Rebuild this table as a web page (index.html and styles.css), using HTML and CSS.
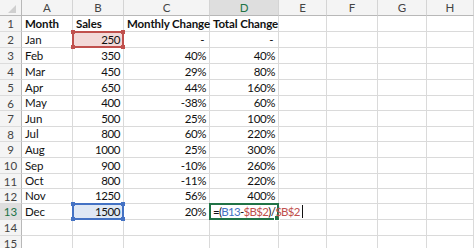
FILE: index.html
```html
<!DOCTYPE html>
<html>
<head>
<meta charset="utf-8">
<link rel="stylesheet" href="styles.css">
</head>
<body>
<div class="sheet">
  <div class="hd corner"><span class="tri"></span></div>
  <div class="hd col">A</div><div class="hd col">B</div><div class="hd col">C</div><div class="hd col sel-col">D</div><div class="hd col">E</div><div class="hd col">F</div><div class="hd col">G</div><div class="hd col">H</div>

  <div class="hd row">1</div><div class="c b">Month</div><div class="c b">Sales</div><div class="c b">Monthly Change</div><div class="c b">Total Change</div><div class="c"></div><div class="c"></div><div class="c"></div><div class="c"></div>
  <div class="hd row">2</div><div class="c">Jan</div><div class="c n ref-red"><span class="box red"><i class="h tl"></i><i class="h tr"></i><i class="h bl"></i><i class="h br"></i></span><span class="v">250</span></div><div class="c n dash">-</div><div class="c n dash">-</div><div class="c"></div><div class="c"></div><div class="c"></div><div class="c"></div>
  <div class="hd row">3</div><div class="c">Feb</div><div class="c n">350</div><div class="c n">40%</div><div class="c n">40%</div><div class="c"></div><div class="c"></div><div class="c"></div><div class="c"></div>
  <div class="hd row">4</div><div class="c">Mar</div><div class="c n">450</div><div class="c n">29%</div><div class="c n">80%</div><div class="c"></div><div class="c"></div><div class="c"></div><div class="c"></div>
  <div class="hd row">5</div><div class="c">Apr</div><div class="c n">650</div><div class="c n">44%</div><div class="c n">160%</div><div class="c"></div><div class="c"></div><div class="c"></div><div class="c"></div>
  <div class="hd row">6</div><div class="c">May</div><div class="c n">400</div><div class="c n">-38%</div><div class="c n">60%</div><div class="c"></div><div class="c"></div><div class="c"></div><div class="c"></div>
  <div class="hd row">7</div><div class="c">Jun</div><div class="c n">500</div><div class="c n">25%</div><div class="c n">100%</div><div class="c"></div><div class="c"></div><div class="c"></div><div class="c"></div>
  <div class="hd row">8</div><div class="c">Jul</div><div class="c n">800</div><div class="c n">60%</div><div class="c n">220%</div><div class="c"></div><div class="c"></div><div class="c"></div><div class="c"></div>
  <div class="hd row">9</div><div class="c">Aug</div><div class="c n">1000</div><div class="c n">25%</div><div class="c n">300%</div><div class="c"></div><div class="c"></div><div class="c"></div><div class="c"></div>
  <div class="hd row">10</div><div class="c">Sep</div><div class="c n">900</div><div class="c n">-10%</div><div class="c n">260%</div><div class="c"></div><div class="c"></div><div class="c"></div><div class="c"></div>
  <div class="hd row">11</div><div class="c">Oct</div><div class="c n">800</div><div class="c n">-11%</div><div class="c n">220%</div><div class="c"></div><div class="c"></div><div class="c"></div><div class="c"></div>
  <div class="hd row">12</div><div class="c">Nov</div><div class="c n">1250</div><div class="c n">56%</div><div class="c n">400%</div><div class="c"></div><div class="c"></div><div class="c"></div><div class="c"></div>
  <div class="hd row sel-row">13</div><div class="c">Dec</div><div class="c n ref-blue"><span class="box blue"><i class="h tl"></i><i class="h tr"></i><i class="h bl"></i><i class="h br"></i></span><span class="v">1500</span></div><div class="c n">20%</div><div class="c active"><span class="abox"><i class="fill"></i></span><span class="formula">=(<span class="fb">B13</span>-<span class="fr">$B$2</span>)/<span class="fr">$B$2</span><span class="caret"></span></span></div><div class="c"></div><div class="c"></div><div class="c"></div><div class="c"></div>
  <div class="hd row">14</div><div class="c"></div><div class="c"></div><div class="c"></div><div class="c"></div><div class="c"></div><div class="c"></div><div class="c"></div><div class="c"></div>
  <div class="hd row">15</div><div class="c"></div><div class="c"></div><div class="c"></div><div class="c"></div><div class="c"></div><div class="c"></div><div class="c"></div><div class="c"></div>
</div>
</body>
</html>
```

FILE: styles.css
```css
html, body {
  margin: 0;
  padding: 0;
  background: #ffffff;
  overflow: hidden;
}

.sheet {
  display: grid;
  grid-template-columns: 22px 51px 51px 86px 69px 48px 51px 49px 1fr;
  grid-template-rows: 16px 16px 16px 16px 16px 16px 15px 16px 15px 16px 16px 15px 15px 16px 16px 16px;
  font-family: "Lato", "Open Sans", sans-serif;
  font-size: 11.5px;
  letter-spacing: -0.1px;
  color: #111;
  width: 474px;
  overflow: hidden;
}

.hd {
  box-sizing: border-box;
  background: #f4f4f4;
  color: #444;
  font-size: 11.5px;
  letter-spacing: 0;
  display: flex;
  align-items: center;
  justify-content: center;
  border-right: 1px solid #d4d4d4;
  border-bottom: 1px solid #d4d4d4;
}

.hd.col {
  border-bottom: 1px solid #b8b8b8;
}

.hd.row {
  border-right: 1px solid #b8b8b8;
  border-bottom: 1px solid #dcdcdc;
}

.corner {
  position: relative;
  border-right: 1px solid #b8b8b8;
  border-bottom: 1px solid #b8b8b8;
}

.tri {
  position: absolute;
  right: 5px;
  bottom: 2px;
  width: 8px;
  height: 8px;
  background: #cfcfcf;
  clip-path: polygon(100% 0, 100% 100%, 0 100%);
}

.sel-col {
  background: #dedede;
  color: #217346;
  border-bottom: 2px solid #217346;
}

.sel-row {
  background: #dedede;
  color: #217346;
  border-right: 2px solid #217346;
}

.c {
  box-sizing: border-box;
  border-right: 1px solid #dadada;
  border-bottom: 1px solid #dadada;
  display: flex;
  align-items: center;
  padding: 0 3px 0 3px;
  white-space: nowrap;
  position: relative;
  line-height: 1;
}

.b {
  font-weight: bold;
}

.n {
  justify-content: flex-end;
  letter-spacing: -0.4px;
  padding-right: 3px;
}

.dash {
  padding-right: 5px;
}

.v {
  position: relative;
}

.ref-red {
  background: #f2d9d8;
}

.ref-blue {
  background: #dfe8f5;
}

.box {
  position: absolute;
  left: -1px;
  top: -1px;
  right: -1px;
  bottom: -1px;
  border: 2px solid;
  box-sizing: border-box;
  z-index: 1;
}

.box.red {
  border-color: #c0504d;
}

.box.blue {
  border-color: #4472c4;
}

.h {
  position: absolute;
  width: 4px;
  height: 4px;
}

.box.red .h {
  background: #c0504d;
}

.box.blue .h {
  background: #4472c4;
}

.h.tl { left: -3px; top: -3px; }
.h.tr { right: -3px; top: -3px; }
.h.bl { left: -3px; bottom: -3px; }
.h.br { right: -3px; bottom: -3px; }

.active {
  overflow: visible;
  z-index: 2;
  padding-left: 3px;
}

.abox {
  position: absolute;
  left: -1px;
  top: -1px;
  right: -1px;
  bottom: -1px;
  border: 2px solid #217346;
  box-sizing: border-box;
}

.fill {
  position: absolute;
  right: -3px;
  bottom: -3px;
  width: 4px;
  height: 4px;
  background: #217346;
  border: 1px solid #ffffff;
}

.formula {
  position: relative;
  color: #111;
  letter-spacing: -0.7px;
}

.fb {
  color: #4472c4;
}

.fr {
  color: #c0504d;
}

.caret {
  display: inline-block;
  width: 1px;
  height: 13px;
  background: #111;
  vertical-align: -2px;
  margin-left: 2px;
}
```
